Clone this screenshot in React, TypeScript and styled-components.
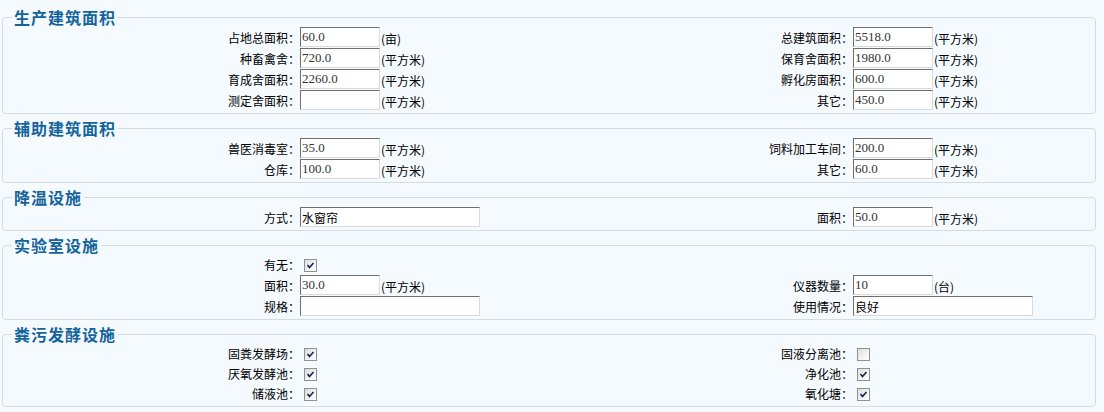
import React from 'react';
import styled, { createGlobalStyle } from 'styled-components';

const GlobalStyle = createGlobalStyle`
    html, body {
        margin: 0;
        padding: 0;
        background: #f5fafe;
    }
    body {
        font-family: "Noto Sans CJK SC", "DejaVu Sans", sans-serif;
        font-size: 12px;
        color: #000;
    }
`;

const Page = styled.div`
    padding: 7px 8px 4px 2px;
`;

const Section = styled.fieldset`
    margin: 0 0 4px 0;
    padding: 0 0 2px 0;
    border: 1px solid #d3dce4;
    border-radius: 4px;
    min-width: 0;
`;

const Legend = styled.legend`
    margin-left: 9px;
    padding: 0 2px;
    font-size: 16px;
    font-weight: bold;
    line-height: 20px;
    letter-spacing: 1px;
    color: #14639b;
`;

const Row = styled.div<{ $check?: boolean }>`
    display: grid;
    grid-template-columns: 297px 256px 297px 1fr;
    height: ${(p) => (p.$check ? 20 : 21)}px;
    align-items: start;
`;

const Label = styled.div<{ $check?: boolean }>`
    text-align: right;
    line-height: ${(p) => (p.$check ? 20 : 21)}px;
    white-space: nowrap;
`;

const Value = styled.div`
    display: flex;
    align-items: flex-start;
`;

const TextInput = styled.input<{ $wide?: boolean }>`
    box-sizing: border-box;
    width: ${(p) => (p.$wide ? 180 : 80)}px;
    height: 20px;
    margin: 0;
    padding: 0 1px;
    border: 1px solid;
    border-color: #6f6f6f #dadada #dadada #6f6f6f;
    background: #fff;
    font-family: "Liberation Serif", "Noto Sans CJK SC", serif;
    font-size: 13px;
    color: #333;
    outline: none;
    &.cjk {
        font-family: "Noto Sans CJK SC", sans-serif;
        font-size: 12px;
        color: #000;
    }
`;

const Unit = styled.span`
    padding: 3px 0 0 1px;
    line-height: 18px;
    white-space: nowrap;
`;

const CheckBox = styled.span`
    box-sizing: border-box;
    width: 13px;
    height: 13px;
    margin: 4px 3px 3px 4px;
    border: 1px solid #8f9294;
    background: linear-gradient(135deg, #dcdcd7 0%, #f4f4f2 60%, #ffffff 100%);
    display: flex;
    align-items: center;
    justify-content: center;
`;

type Cell = {
    label: string;
    kind?: 'text' | 'check';
    value?: string;
    checked?: boolean;
    unit?: string;
    wide?: boolean;
};

type RowData = { left?: Cell; right?: Cell };

type SectionData = { title: string; rows: RowData[] };

const sq = '(平方米)';

const sections: SectionData[] = [
    {
        title: '生产建筑面积',
        rows: [
            { left: { label: '占地总面积：', value: '60.0', unit: '(亩)' }, right: { label: '总建筑面积：', value: '5518.0', unit: sq } },
            { left: { label: '种畜禽舍：', value: '720.0', unit: sq }, right: { label: '保育舍面积：', value: '1980.0', unit: sq } },
            { left: { label: '育成舍面积：', value: '2260.0', unit: sq }, right: { label: '孵化房面积：', value: '600.0', unit: sq } },
            { left: { label: '测定舍面积：', value: '', unit: sq }, right: { label: '其它：', value: '450.0', unit: sq } },
        ],
    },
    {
        title: '辅助建筑面积',
        rows: [
            { left: { label: '兽医消毒室：', value: '35.0', unit: sq }, right: { label: '饲料加工车间：', value: '200.0', unit: sq } },
            { left: { label: '仓库：', value: '100.0', unit: sq }, right: { label: '其它：', value: '60.0', unit: sq } },
        ],
    },
    {
        title: '降温设施',
        rows: [
            { left: { label: '方式：', value: '水窗帘', wide: true }, right: { label: '面积：', value: '50.0', unit: sq } },
        ],
    },
    {
        title: '实验室设施',
        rows: [
            { left: { label: '有无：', kind: 'check', checked: true } },
            { left: { label: '面积：', value: '30.0', unit: sq }, right: { label: '仪器数量：', value: '10', unit: '(台)' } },
            { left: { label: '规格：', value: '', wide: true }, right: { label: '使用情况：', value: '良好', wide: true } },
        ],
    },
    {
        title: '粪污发酵设施',
        rows: [
            { left: { label: '固粪发酵场：', kind: 'check', checked: true }, right: { label: '固液分离池：', kind: 'check', checked: false } },
            { left: { label: '厌氧发酵池：', kind: 'check', checked: true }, right: { label: '净化池：', kind: 'check', checked: true } },
            { left: { label: '储液池：', kind: 'check', checked: true }, right: { label: '氧化塘：', kind: 'check', checked: true } },
        ],
    },
];

const Check: React.FC<{ checked?: boolean }> = ({ checked }) => (
    <CheckBox>
        {checked && (
            <svg width="9" height="9" viewBox="0 0 9 9">
                <path d="M1.5 4 L3.5 6.5 L7.5 2" fill="none" stroke="#1d1d5c" strokeWidth="1.6" />
            </svg>
        )}
    </CheckBox>
);

const isCjk = (s: string) => /[\u4e00-\u9fff]/.test(s);

const renderCell = (cell?: Cell) => {
    if (!cell) return [<Label key="l" />, <Value key="v" />];
    const check = cell.kind === 'check';
    return [
        <Label key="l" $check={check}>{cell.label}</Label>,
        <Value key="v">
            {check ? (
                <Check checked={cell.checked} />
            ) : (
                <>
                    <TextInput
                        type="text"
                        readOnly
                        $wide={cell.wide}
                        className={isCjk(cell.value || '') ? 'cjk' : ''}
                        value={cell.value}
                    />
                    {cell.unit && <Unit>{cell.unit}</Unit>}
                </>
            )}
        </Value>,
    ];
};

const App: React.FC = () => {
    return (
        <>
            <GlobalStyle />
            <Page>
                {sections.map((s) => (
                    <Section key={s.title}>
                        <Legend>{s.title}</Legend>
                        {s.rows.map((r, i) => {
                            const check = (r.left?.kind || r.right?.kind) === 'check';
                            return (
                                <Row key={i} $check={check}>
                                    {renderCell(r.left)}
                                    {renderCell(r.right)}
                                </Row>
                            );
                        })}
                    </Section>
                ))}
            </Page>
        </>
    );
};

export default App;
